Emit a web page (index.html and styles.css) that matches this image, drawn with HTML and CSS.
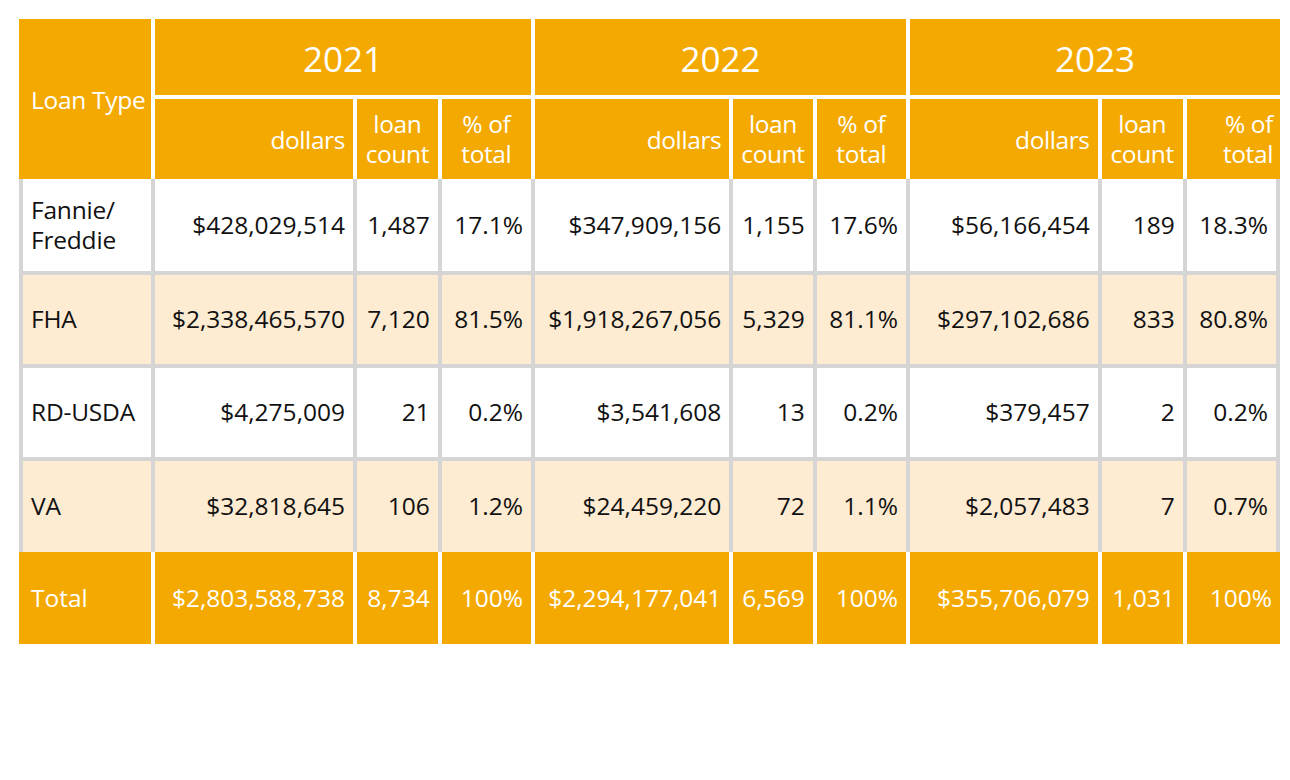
FILE: index.html
```html
<!DOCTYPE html>
<html>
<head>
<meta charset="utf-8">
<link rel="stylesheet" href="styles.css">
</head>
<body>
<div class="page">
  <div class="tbl">
    <div class="c h lt">Loan Type</div>
    <div class="c h yr">2021</div>
    <div class="c h yr">2022</div>
    <div class="c h yr last">2023</div>

    <div class="c h sub dol">dollars</div>
    <div class="c h sub ctr">loan<br>count</div>
    <div class="c h sub ctr">% of<br>total</div>
    <div class="c h sub dol">dollars</div>
    <div class="c h sub ctr">loan<br>count</div>
    <div class="c h sub ctr">% of<br>total</div>
    <div class="c h sub dol">dollars</div>
    <div class="c h sub ctr">loan<br>count</div>
    <div class="c h sub rt last">% of<br>total</div>

    <div class="c b name">Fannie/<br>Freddie</div>
    <div class="c b num">$428,029,514</div>
    <div class="c b num">1,487</div>
    <div class="c b num">17.1%</div>
    <div class="c b num">$347,909,156</div>
    <div class="c b num">1,155</div>
    <div class="c b num">17.6%</div>
    <div class="c b num">$56,166,454</div>
    <div class="c b num">189</div>
    <div class="c b num">18.3%</div>

    <div class="c b alt name">FHA</div>
    <div class="c b alt num">$2,338,465,570</div>
    <div class="c b alt num">7,120</div>
    <div class="c b alt num">81.5%</div>
    <div class="c b alt num">$1,918,267,056</div>
    <div class="c b alt num">5,329</div>
    <div class="c b alt num">81.1%</div>
    <div class="c b alt num">$297,102,686</div>
    <div class="c b alt num">833</div>
    <div class="c b alt num">80.8%</div>

    <div class="c b name">RD-USDA</div>
    <div class="c b num">$4,275,009</div>
    <div class="c b num">21</div>
    <div class="c b num">0.2%</div>
    <div class="c b num">$3,541,608</div>
    <div class="c b num">13</div>
    <div class="c b num">0.2%</div>
    <div class="c b num">$379,457</div>
    <div class="c b num">2</div>
    <div class="c b num">0.2%</div>

    <div class="c b alt nb name">VA</div>
    <div class="c b alt nb num">$32,818,645</div>
    <div class="c b alt nb num">106</div>
    <div class="c b alt nb num">1.2%</div>
    <div class="c b alt nb num">$24,459,220</div>
    <div class="c b alt nb num">72</div>
    <div class="c b alt nb num">1.1%</div>
    <div class="c b alt nb num">$2,057,483</div>
    <div class="c b alt nb num">7</div>
    <div class="c b alt nb num">0.7%</div>

    <div class="c t tname">Total</div>
    <div class="c t num">$2,803,588,738</div>
    <div class="c t num">8,734</div>
    <div class="c t num">100%</div>
    <div class="c t num">$2,294,177,041</div>
    <div class="c t num">6,569</div>
    <div class="c t num">100%</div>
    <div class="c t num">$355,706,079</div>
    <div class="c t num">1,031</div>
    <div class="c t num last">100%</div>
  </div>
</div>
</body>
</html>
```

FILE: styles.css
```css
html, body {
  margin: 0;
  padding: 0;
  background: #ffffff;
}

.page {
  padding: 19px 0 0 19px;
  font-family: "Open Sans", "Noto Sans", sans-serif;
}

.tbl {
  display: grid;
  width: 1261px;
  grid-template-columns: 136px 202px 84.7px 93.3px 198.3px 83.4px 93.3px 191.7px 85px 93.3px;
  grid-template-rows: 80.3px 79.7px 96px 92.7px 93.3px 90.7px 92.3px;
}

.c {
  box-sizing: border-box;
  display: flex;
  flex-direction: column;
  justify-content: center;
  font-size: 24.5px;
  line-height: 30px;
  white-space: nowrap;
  min-width: 0;
}

/* header */
.h {
  background: #f4a900;
  color: #ffffff;
  border-right: 4px solid #ffffff;
}
.h.last { border-right: 0; }

.lt {
  grid-row: span 2;
  padding-left: 12px;
  padding-top: 2px;
  letter-spacing: -0.3px;
}

.yr {
  grid-column: span 3;
  border-bottom: 4px solid #ffffff;
  text-align: center;
  font-size: 35px;
  padding-top: 4px;
}

.sub { padding: 0 8px; letter-spacing: -0.4px; }
.sub.dol { text-align: right; padding-top: 2px; }
.sub.ctr { text-align: center; }
.sub.rt { text-align: right; padding-right: 7px; }

/* body */
.b {
  background: #ffffff;
  color: #111111;
  border-right: 4px solid #d5d5d5;
  border-bottom: 4px solid #d5d5d5;
}
.b.alt { background: #fdebd2; }
.b.nb { border-bottom: 0; }
.b.name {
  border-left: 4px solid #d5d5d5;
  padding-left: 8px;
  letter-spacing: -0.2px;
}
.num {
  text-align: right;
  padding-right: 8px;
}
.b:nth-child(10n+3), .b:nth-child(10n+13) { }

/* total */
.t {
  background: #f4a900;
  color: #ffffff;
  border-right: 4px solid #ffffff;
}
.t.last { border-right: 0; }
.tname { padding-left: 12px; }
```
